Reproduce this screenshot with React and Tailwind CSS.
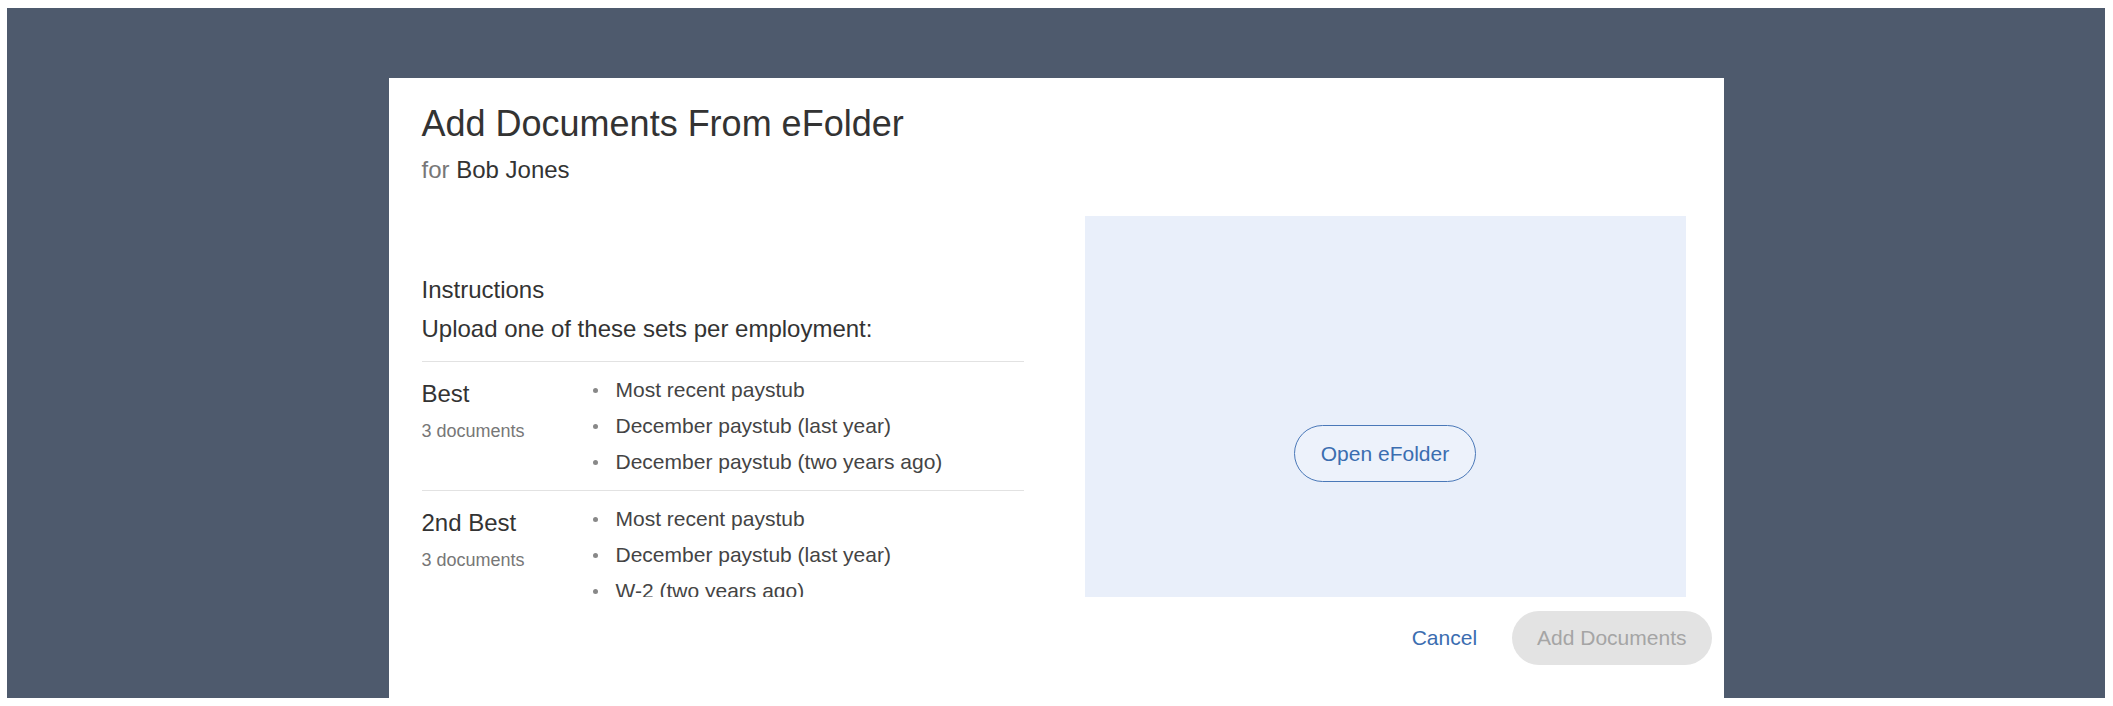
import React from "react";

const sets = [
  {
    name: "Best",
    count: "3 documents",
    items: ["Most recent paystub", "December paystub (last year)", "December paystub (two years ago)"],
  },
  {
    name: "2nd Best",
    count: "3 documents",
    items: ["Most recent paystub", "December paystub (last year)", "W-2 (two years ago)"],
  },
];

const SetRow = ({ set }) => (
  <div className="flex border-t border-[#e2e2e2] py-[10px]">
    <div className="w-[171px] shrink-0">
      <div className="mt-[4px] text-[24px] leading-[36px] text-[#333]">{set.name}</div>
      <div className="mt-[6px] text-[18px] leading-[27px] text-[#777]">{set.count}</div>
    </div>
    <ul>
      {set.items.map((item) => (
        <li key={item} className="flex items-center h-[36px] text-[21px] text-[#444]">
          <span className="w-[5px] h-[5px] rounded-full bg-[#888] mr-[18px]" />
          {item}
        </li>
      ))}
    </ul>
  </div>
);

export default function App() {
  return (
    <div
      className="bg-white h-[706px] pt-[8px] pb-[8px] pl-[7px] pr-[8px]"
      style={{ fontFamily: '"Liberation Sans", Arial, sans-serif' }}
    >
      <div className="bg-[#4e5a6d] h-full overflow-hidden pt-[70px]">
        <div className="mx-auto w-[1335px] h-[700px] bg-white pt-[24px] pl-[33px] pr-[12px]">
          <h1 className="text-[36px] leading-[43px] text-[#333]">Add Documents From eFolder</h1>
          <div className="mt-[7px] text-[24px] leading-[36px] text-[#333]">
            <span className="text-[#777]">for</span> Bob Jones
          </div>

          <div className="flex mt-[28px] mr-[26px] gap-[61px]">
            {/* instructions list is clipped by its box, like the original */}
            <div className="w-[602px] h-[381px] overflow-hidden pt-[56px]">
              <div className="text-[24px] leading-[36px] text-[#333]">Instructions</div>
              <div className="mt-[3px] text-[24px] leading-[36px] text-[#333]">Upload one of these sets per employment:</div>
              <div className="mt-[14px]">
                {sets.map((set) => (
                  <SetRow key={set.name} set={set} />
                ))}
              </div>
            </div>

            <div className="w-[601px] h-[381px] bg-[#e9effa] flex items-center justify-center pt-[94px]">
              <button className="h-[57px] w-[182px] rounded-full border-[1.5px] border-[#4a78b8] bg-[#edf2fb] text-[21px] text-[#3b6db0]">
                Open eFolder
              </button>
            </div>
          </div>

          <div className="flex justify-end items-center mt-[14px]">
            <button className="mr-[35px] text-[21px] text-[#3b6db0]">Cancel</button>
            <button className="h-[54px] px-[25px] rounded-full bg-[#e3e3e3] text-[21px] text-[#a5a5a5]">
              Add Documents
            </button>
          </div>
        </div>
      </div>
    </div>
  );
}
